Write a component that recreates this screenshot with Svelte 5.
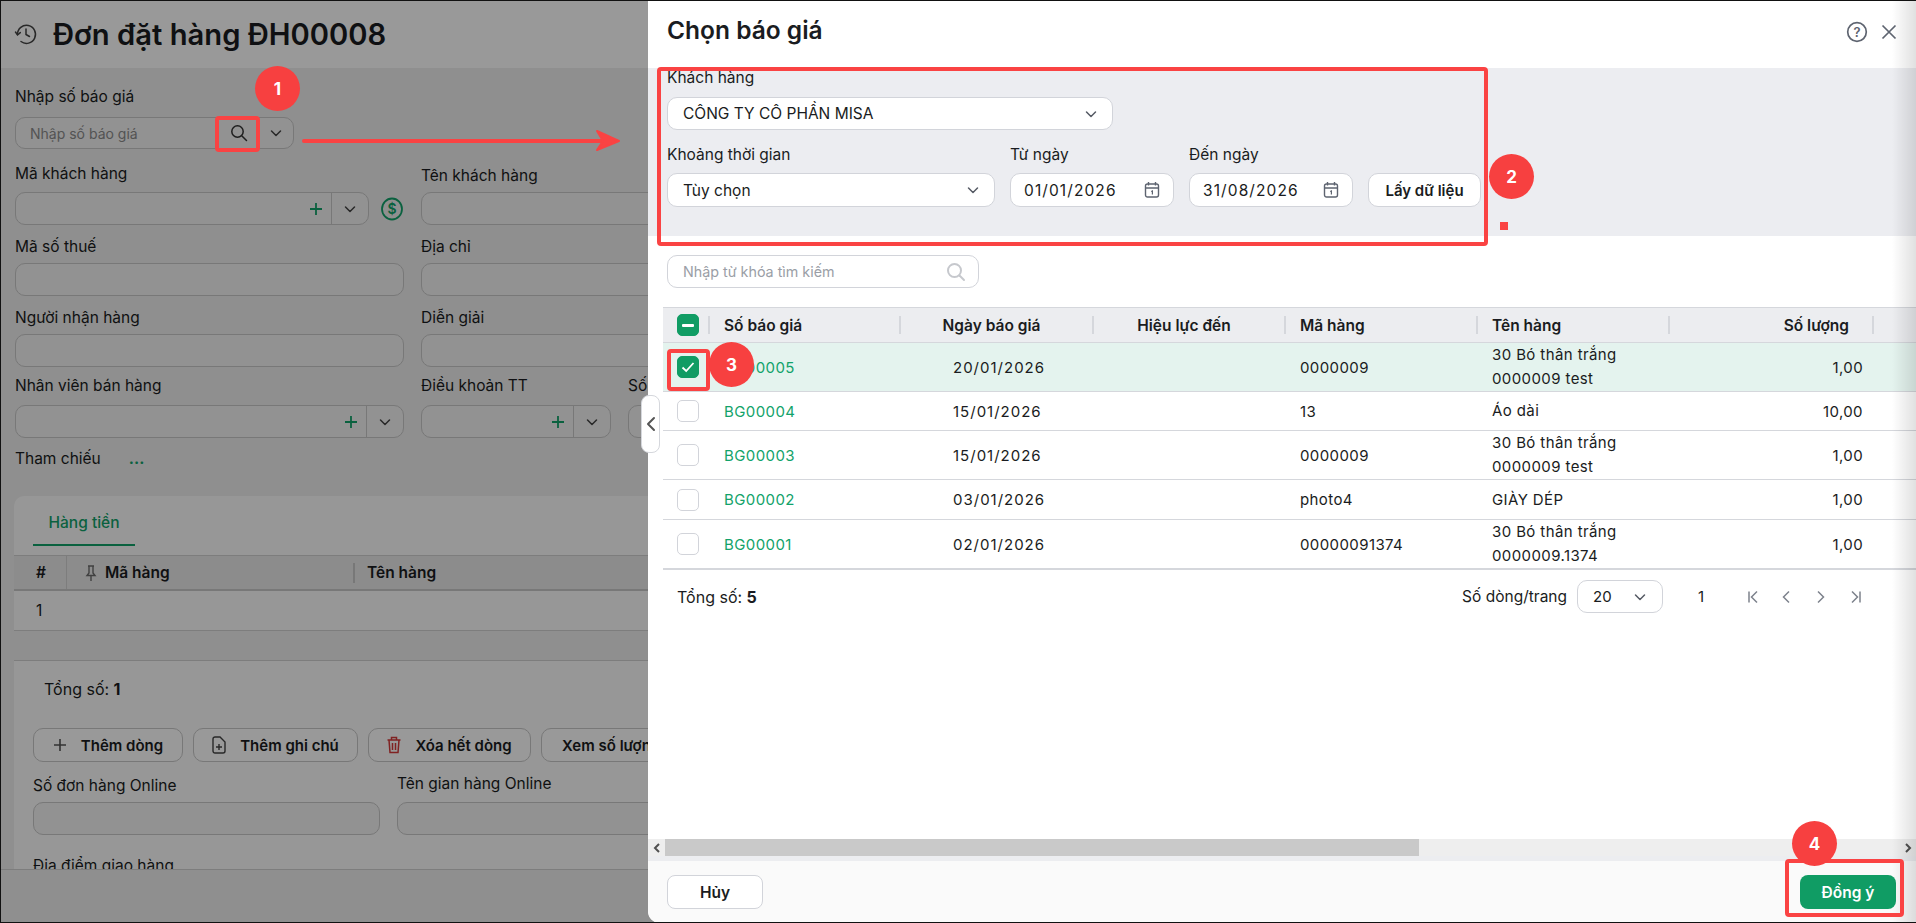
<script>
  const rows = [
    { code: 'BG00005', date: '20/01/2026', item: '0000009', name: ['30 Bó thân trắng', '0000009 test'], qty: '1,00', h: 49, on: true },
    { code: 'BG00004', date: '15/01/2026', item: '13', name: ['Áo dài'], qty: '10,00', h: 39 },
    { code: 'BG00003', date: '15/01/2026', item: '0000009', name: ['30 Bó thân trắng', '0000009 test'], qty: '1,00', h: 49 },
    { code: 'BG00002', date: '03/01/2026', item: 'photo4', name: ['GIÀY DÉP'], qty: '1,00', h: 40 },
    { code: 'BG00001', date: '02/01/2026', item: '00000091374', name: ['30 Bó thân trắng', '0000009.1374'], qty: '1,00', h: 49 }
  ];
  const widths = [47, 191, 193, 192, 192, 192, 204];
</script>

{#snippet chevron()}
  <svg class="chev" width="14" height="14" viewBox="0 0 14 14"><path d="M2.5 5l4.5 4.5L11.5 5" fill="none" stroke="currentColor" stroke-width="1.5" stroke-linecap="round" stroke-linejoin="round"/></svg>
{/snippet}

{#snippet plus()}
  <svg width="14" height="14" viewBox="0 0 14 14"><path d="M7 1v12M1 7h12" fill="none" stroke="#12a26a" stroke-width="1.8"/></svg>
{/snippet}

{#snippet calendar()}
  <svg width="16" height="18" viewBox="0 0 16 18"><g fill="none" stroke="#5e6470" stroke-width="1.4"><rect x="1.5" y="3" width="13" height="13" rx="2"/><path d="M1.5 7h13M4.5 1v3.5M11.5 1v3.5"/><path d="M7.2 10.5L8.4 10v3.6" stroke-width="1.2"/></g></svg>
{/snippet}

<div class="shot">
  <!-- trang phia sau -->
  <div class="page">
    <header class="page-head">
      <svg width="24" height="24" viewBox="0 0 24 24"><g fill="none" stroke="#444" stroke-width="1.5" stroke-linecap="round"><path d="M3.5 12.5A9 9 0 1 1 7 19.5"/><path d="M12 7v5.5l3.5 2"/><path d="M1.5 10l2 3 2.8-2.4" /></g></svg>
      <h1>Đơn đặt hàng ĐH00008</h1>
    </header>

    <div class="page-body">
      <div class="form">
        <div class="lab">Nhập số báo giá</div>
        <div class="box quote">
          <span class="ph">Nhập số báo giá</span>
          <span class="quote-search">
            <svg width="18" height="18" viewBox="0 0 18 18"><g fill="none" stroke="#333" stroke-width="1.5" stroke-linecap="round"><circle cx="7.5" cy="7.5" r="5.7"/><path d="M12 12l4.5 4.5"/></g></svg>
          </span>
          <span class="quote-arrow">{@render chevron()}</span>
        </div>

        <div class="form-grid">
          <div class="field lift">
            <div class="lab">Mã khách hàng</div>
            <div class="cust-line">
              <div class="box combo grow">
                <span class="combo-plus">{@render plus()}</span>
                <span class="combo-arrow">{@render chevron()}</span>
              </div>
              <svg class="money" width="22" height="24" viewBox="0 0 22 24"><ellipse cx="11" cy="12" rx="10" ry="10.5" fill="none" stroke="#12a26a" stroke-width="1.8"/><text x="11" y="17" text-anchor="middle" font-size="14" font-weight="600" fill="#12a26a" font-family="Inter, sans-serif">$</text></svg>
            </div>
          </div>
          <div class="field"><div class="lab">Tên khách hàng</div><div class="box"></div></div>

          <div class="field"><div class="lab">Mã số thuế</div><div class="box"></div></div>
          <div class="field"><div class="lab">Địa chỉ</div><div class="box"></div></div>

          <div class="field"><div class="lab">Người nhận hàng</div><div class="box"></div></div>
          <div class="field"><div class="lab">Diễn giải</div><div class="box"></div></div>

          <div class="field lift2">
            <div class="lab">Nhân viên bán hàng</div>
            <div class="box combo"><span class="combo-plus">{@render plus()}</span><span class="combo-arrow">{@render chevron()}</span></div>
          </div>
          <div class="term-line">
            <div class="field lift2 term">
              <div class="lab">Điều khoản TT</div>
              <div class="box combo"><span class="combo-plus">{@render plus()}</span><span class="combo-arrow">{@render chevron()}</span></div>
            </div>
            <div class="field lift2 grow"><div class="lab">Số ngày</div><div class="box"></div></div>
          </div>
        </div>

        <div class="ref"><span>Tham chiếu</span><b>...</b></div>
      </div>

      <section class="card">
        <div class="tabs"><span class="tab">Hàng tiền</span></div>
        <div class="grid-head">
          <span class="c-no">#</span>
          <span class="c-code">
            <svg width="12" height="18" viewBox="0 0 12 18"><path d="M3 2h6M4 2v7L2 11.5h8L8 9V2M6 11.5V17" fill="none" stroke="#6c6c6c" stroke-width="1.4"/></svg>
            Mã hàng
          </span>
          <span class="c-name">Tên hàng</span>
        </div>
        <div class="grid-row"><span class="c-no">1</span></div>
        <div class="grid-sum"></div>

        <div class="total">Tổng số: <b>1</b></div>

        <div class="actions">
          <button class="btn w150">
            <svg width="14" height="14" viewBox="0 0 14 14"><path d="M7 1v12M1 7h12" fill="none" stroke="#555" stroke-width="1.6"/></svg>
            Thêm dòng
          </button>
          <button class="btn w165">
            <svg width="14" height="18" viewBox="0 0 14 18"><g fill="none" stroke="#444" stroke-width="1.4"><path d="M1 3a2 2 0 0 1 2-2h5l5 5v9a2 2 0 0 1-2 2H3a2 2 0 0 1-2-2z"/><path d="M7 8v6M4 11h6"/></g></svg>
            Thêm ghi chú
          </button>
          <button class="btn w163">
            <svg width="14" height="18" viewBox="0 0 14 18"><g fill="none" stroke="#d63a3a" stroke-width="1.5"><path d="M0.5 4h13M4.5 4V1.5h5V4M2 4l1 12.5h8L12 4M5.5 7v7M8.5 7v7"/></g></svg>
            Xóa hết dòng
          </button>
          <button class="btn">Xem số lượng tồn</button>
        </div>

        <div class="online">
          <div class="on-field"><div class="lab">Số đơn hàng Online</div><div class="box"></div></div>
          <div class="on-field up"><div class="lab">Tên gian hàng Online</div><div class="box"></div></div>
        </div>
        <div class="lab place">Địa điểm giao hàng</div>
      </section>
    </div>
    <footer class="page-foot"></footer>
  </div>
  <div class="mask"></div>

  <!-- drawer chon bao gia -->
  <aside class="drawer">
    <button class="handle" aria-label="Thu gọn">
      <svg width="10" height="16" viewBox="0 0 10 16"><path d="M8 2L2 8l6 6" fill="none" stroke="#555" stroke-width="2" stroke-linecap="round" stroke-linejoin="round"/></svg>
    </button>
    <div class="dr-head">
      <h2>Chọn báo giá</h2>
      <svg class="help" width="22" height="22" viewBox="0 0 22 22"><circle cx="11" cy="11" r="9.3" fill="none" stroke="#5e6470" stroke-width="1.7"/><text x="11" y="16" text-anchor="middle" font-size="13" font-weight="600" fill="#5e6470" font-family="Inter, sans-serif">?</text></svg>
      <svg class="close" width="16" height="16" viewBox="0 0 16 16"><path d="M1.5 1.5l13 13M14.5 1.5l-13 13" fill="none" stroke="#5e6470" stroke-width="1.7"/></svg>
    </div>

    <div class="filter">
      <div class="f-lab">Khách hàng</div>
      <div class="ctl cust"><span>CÔNG TY CÔ PHẦN MISA</span>{@render chevron()}</div>
      <div class="f-line">
        <div class="f-col period">
          <div class="f-lab">Khoảng thời gian</div>
          <div class="ctl"><span>Tùy chọn</span>{@render chevron()}</div>
        </div>
        <div class="f-col date">
          <div class="f-lab">Từ ngày</div>
          <div class="ctl num"><span>01/01/2026</span>{@render calendar()}</div>
        </div>
        <div class="f-col date">
          <div class="f-lab">Đến ngày</div>
          <div class="ctl num"><span>31/08/2026</span>{@render calendar()}</div>
        </div>
        <button class="get">Lấy dữ liệu</button>
      </div>
    </div>

    <div class="search">
      <span>Nhập từ khóa tìm kiếm</span>
      <svg width="20" height="20" viewBox="0 0 20 20"><g fill="none" stroke="#c6c8cd" stroke-width="2" stroke-linecap="round"><circle cx="8.5" cy="8.5" r="6.5"/><path d="M13.5 13.5l4.5 4.5"/></g></svg>
    </div>

    <table>
      <colgroup>
        {#each widths as w}<col style="width:{w}px" />{/each}
        <col />
      </colgroup>
      <thead>
        <tr>
          <th class="sep"><span class="cb full"><i></i></span></th>
          <th class="sep pl">Số báo giá</th>
          <th class="sep mid">Ngày báo giá</th>
          <th class="sep mid">Hiệu lực đến</th>
          <th class="sep pl">Mã hàng</th>
          <th class="sep pl">Tên hàng</th>
          <th class="sep qty-h">Số lượng</th>
          <th></th>
        </tr>
      </thead>
      <tbody>
        {#each rows as r}
          <tr class:on={r.on} style="height:{r.h}px">
            <td>
              <span class="cb" class:full={r.on}>
                {#if r.on}
                  <svg width="14" height="12" viewBox="0 0 14 12"><path d="M1.5 6.5L5.2 10 12.5 2" fill="none" stroke="#fff" stroke-width="1.8"/></svg>
                {/if}
              </span>
            </td>
            <td class="pl code">{r.code}</td>
            <td class="dt">{r.date}</td>
            <td></td>
            <td class="pl">{r.item}</td>
            <td class="pl nm">{#each r.name as line}<div>{line}</div>{/each}</td>
            <td class="qty">{r.qty}</td>
            <td></td>
          </tr>
        {/each}
      </tbody>
    </table>

    <div class="t-foot">
      <div class="t-total">Tổng số: <b>5</b></div>
      <div class="pager">
        <span>Số dòng/trang</span>
        <div class="size"><span>20</span>{@render chevron()}</div>
        <span class="pg">1</span>
        <svg class="nav" width="116" height="14" viewBox="0 0 116 14"><g fill="none" stroke="#7d828c" stroke-width="1.5"><path d="M2 1.5v11M10 1.5L4.5 7l5.5 5.5"/><path d="M42 1.5L36.5 7l5.5 5.5"/><path d="M71 1.5L76.5 7 71 12.5"/><path d="M105 1.5l5.5 5.5-5.5 5.5M113 1.5v11"/></g></svg>
      </div>
    </div>

    <div class="spacer"></div>

    <div class="hbar">
      <span class="hb-btn"><svg width="8" height="10" viewBox="0 0 8 10"><path d="M6 1L2 5l4 4" fill="none" stroke="#505050" stroke-width="2"/></svg></span>
      <span class="hb-thumb"></span>
      <span class="hb-btn end"><svg width="8" height="10" viewBox="0 0 8 10"><path d="M2 1l4 4-4 4" fill="none" stroke="#505050" stroke-width="2"/></svg></span>
    </div>
    <div class="dr-foot">
      <button class="cancel">Hủy</button>
      <button class="ok">Đồng ý</button>
    </div>
    <div class="edge"></div>
  </aside>

  <!-- chu thich do ve len anh -->
  <div class="mark" style="left:215px;top:116px;width:45px;height:36px"></div>
  <div class="mark" style="left:657px;top:67px;width:831px;height:179px"></div>
  <div class="mark" style="left:667px;top:349px;width:43px;height:42px"></div>
  <div class="mark" style="left:1785px;top:859px;width:119px;height:58px"></div>
  <span class="badge" style="left:255px;top:66px">1</span>
  <span class="badge" style="left:1489px;top:154px">2</span>
  <span class="badge" style="left:709px;top:342px">3</span>
  <span class="badge" style="left:1792px;top:821px">4</span>
  <span class="dot"></span>
  <svg class="arrow" width="330" height="30" viewBox="0 0 330 30"><path d="M3 16H312" stroke="#fa4343" stroke-width="4" stroke-linecap="round"/><path d="M296 6l22 10-22 9 6-9z" fill="#fa4343" stroke="#fa4343" stroke-width="2" stroke-linejoin="round"/></svg>
</div>

<style>
  :global(body) {
    margin: 0;
    font-family: Inter, "Noto Sans", sans-serif;
    color: #1a1c21;
    font-size: 15.5px;
    overflow: hidden;
  }

  button {
    font-family: inherit;
    cursor: pointer;
  }

  .shot {
    position: relative;
    width: 1916px;
    height: 923px;
    overflow: hidden;
    background: #ecedf1;
  }

  .shot::after {
    content: '';
    position: absolute;
    inset: 0;
    border: 1px solid #111;
    border-right: 0;
    pointer-events: none;
    z-index: 9;
  }

  /* trang phia sau */
  .page {
    display: flex;
    flex-direction: column;
    width: 1100px;
    height: 923px;
    background: #eeeeee;
  }

  .page-head {
    display: flex;
    align-items: center;
    gap: 15px;
    height: 68px;
    padding-left: 14px;
    background: #fff;
    flex: none;
  }

  h1 {
    margin: 0;
    font-size: 29.2px;
    font-weight: 600;
  }

  .page-body {
    flex: 1;
    overflow: hidden;
    padding-top: 19px;
  }

  .page-foot {
    flex: none;
    height: 53px;
    background: #eeeeee;
    border-top: 1px solid #d0d0d0;
  }

  .form {
    padding: 0 15px;
  }

  .lab {
    height: 20px;
    line-height: 20px;
    white-space: nowrap;
  }

  .box {
    height: 33px;
    box-sizing: border-box;
    border: 1px solid #c8c8c8;
    border-radius: 10px;
    background: #f3f3f3;
  }

  .quote {
    display: flex;
    align-items: center;
    width: 279px;
    height: 32px;
    margin-top: 10px;
  }

  .ph {
    flex: 1;
    padding-left: 14px;
    color: #8b8b8b;
    font-size: 14px;
  }

  .quote-search {
    display: flex;
    justify-content: center;
    width: 39px;
  }

  .quote-arrow {
    display: flex;
    justify-content: center;
    width: 35px;
    color: #444;
  }

  .form-grid {
    display: grid;
    grid-template-columns: 389px 600px;
    grid-template-rows: repeat(4, 59px);
    column-gap: 17px;
    row-gap: 12px;
    margin-top: 17px;
  }

  .field {
    display: flex;
    flex-direction: column;
    justify-content: flex-end;
    gap: 6px;
    min-width: 0;
  }

  .field > * {
    flex: none;
  }

  .field.lift {
    gap: 8px;
  }

  .field.lift2 {
    gap: 9px;
  }

  .field.grow {
    flex: 1;
  }

  .cust-line {
    display: flex;
    align-items: center;
    gap: 12px;
  }

  .grow {
    flex: 1;
  }

  .money {
    flex: none;
    margin-right: 1px;
  }

  .combo {
    display: flex;
    align-items: center;
    justify-content: flex-end;
  }

  .combo-plus {
    display: flex;
    padding-right: 8px;
  }

  .combo-arrow {
    display: flex;
    align-items: center;
    justify-content: center;
    width: 36px;
    height: 100%;
    border-left: 1px solid #c8c8c8;
    color: #444;
  }

  .term-line {
    display: flex;
    gap: 17px;
  }

  .term {
    width: 190px;
  }

  .ref {
    display: flex;
    gap: 28px;
    margin-top: 11px;
    line-height: 20px;
  }

  .ref b {
    color: #12a26a;
  }

  .card {
    margin: 27px 0 0 14px;
    height: 374px;
    overflow: hidden;
    border-radius: 10px 0 0 0;
    background: #fcfcfc;
  }

  .tabs {
    height: 59px;
    box-sizing: border-box;
    padding-left: 19px;
  }

  .tab {
    display: block;
    box-sizing: border-box;
    width: 102px;
    height: 50px;
    padding-top: 17px;
    text-align: center;
    color: #12a26a;
    font-weight: 500;
    border-bottom: 2px solid #12a26a;
  }

  .grid-head {
    display: flex;
    align-items: center;
    box-sizing: border-box;
    height: 36px;
    border-top: 1px solid #d0d0d0;
    border-bottom: 2px solid #c8c8c8;
    background: #e9e9e9;
    font-weight: 600;
  }

  .c-no {
    width: 52px;
    box-sizing: border-box;
    padding-left: 22px;
  }

  .c-code {
    display: flex;
    align-items: center;
    gap: 8px;
    width: 287px;
    box-sizing: border-box;
    padding-left: 18px;
    border-left: 1px solid #d0d0d0;
    height: 100%;
  }

  .c-name {
    padding-left: 12px;
    border-left: 2px solid #c8c8c8;
    line-height: 20px;
  }

  .grid-row {
    display: flex;
    align-items: center;
    height: 39px;
    border-bottom: 1px solid #d0d0d0;
  }

  .grid-sum {
    height: 29px;
    background: #eeeeee;
    border-bottom: 1px solid #d0d0d0;
  }

  .total {
    padding: 18px 0 0 30px;
    line-height: 20px;
    font-size: 16px;
  }

  .actions {
    display: flex;
    gap: 10px;
    margin: 29px 0 0 19px;
  }

  .btn {
    display: flex;
    flex: none;
    align-items: center;
    justify-content: center;
    gap: 14px;
    height: 34px;
    padding: 0 20px;
    box-sizing: border-box;
    border: 1px solid #c8c8c8;
    border-radius: 10px;
    background: #fff;
    color: #1a1c21;
    font-size: 15px;
    font-weight: 600;
    white-space: nowrap;
  }

  .btn svg {
    flex: none;
  }

  .w150 { width: 150px; padding: 0; }
  .w165 { width: 165px; padding: 0; }
  .w163 { width: 163px; padding: 0; }

  .online {
    display: flex;
    align-items: flex-end;
    gap: 17px;
    margin: 12px 0 0 19px;
  }

  .on-field {
    width: 347px;
    display: flex;
    flex-direction: column;
    gap: 6px;
  }

  .on-field.up {
    width: 400px;
    gap: 8px;
  }

  .place {
    margin: 21px 0 0 19px;
  }

  .mask {
    position: absolute;
    inset: 0;
    background: rgba(0, 0, 0, 0.4);
  }

  /* drawer */
  .drawer {
    position: absolute;
    left: 648px;
    top: 0;
    bottom: 0;
    right: 0;
    display: flex;
    flex-direction: column;
    background: #fff;
    border-radius: 0 0 0 12px;
  }

  .handle {
    position: absolute;
    left: -7px;
    top: 395px;
    width: 19px;
    height: 58px;
    padding: 0;
    display: flex;
    align-items: center;
    justify-content: center;
    background: #fff;
    border: 1px solid #d5d7dc;
    border-radius: 8px;
    z-index: 2;
  }

  .dr-head {
    display: flex;
    align-items: center;
    flex: none;
    height: 68px;
    padding: 0 19px;
    position: relative;
  }

  h2 {
    margin: 0 0 8px;
    flex: 1;
    font-size: 24.5px;
    font-weight: 600;
  }

  .help {
    margin: 0 13px 4px 0;
  }

  .close {
    margin: 0 0 4px 0;
  }

  .filter {
    flex: none;
    height: 168px;
    box-sizing: border-box;
    padding-left: 19px;
    background: #ecedf1;
  }

  .f-lab {
    height: 20px;
    line-height: 20px;
    white-space: nowrap;
  }

  .ctl {
    display: flex;
    align-items: center;
    justify-content: space-between;
    box-sizing: border-box;
    height: 34px;
    padding: 0 14px 0 15px;
    background: #fff;
    border: 1px solid #d2d4da;
    border-radius: 10px;
  }

  .ctl .chev {
    color: #555a64;
  }

  .cust {
    width: 446px;
    height: 33px;
    margin-top: 9px;
  }

  .f-line {
    display: flex;
    align-items: flex-end;
    gap: 15px;
    margin-top: 15px;
  }

  .f-col .ctl {
    margin-top: 8px;
  }

  .period {
    width: 328px;
  }

  .date {
    width: 164px;
  }

  .num {
    padding: 0 13px;
    letter-spacing: 1.1px;
  }

  .get {
    width: 113px;
    height: 34px;
    padding: 0;
    background: #fff;
    border: 1px solid #d2d4da;
    border-radius: 10px;
    color: #1a1c21;
    font-size: 15px;
    font-weight: 600;
  }

  .search {
    display: flex;
    align-items: center;
    justify-content: space-between;
    box-sizing: border-box;
    flex: none;
    width: 312px;
    height: 33px;
    margin: 19px 0 0 19px;
    padding: 0 12px 0 15px;
    border: 1px solid #d2d4da;
    border-radius: 10px;
    color: #9a9ea6;
    font-size: 14.3px;
  }

  table {
    flex: none;
    margin: 19px 0 0 15px;
    width: 1253px;
    table-layout: fixed;
    border-collapse: collapse;
  }

  th {
    position: relative;
    height: 34px;
    padding: 0;
    background: #ecedf0;
    border-top: 1px solid #d5d7dc;
    border-bottom: 1px solid #d5d7dc;
    font-size: 15.5px;
    font-weight: 600;
    text-align: left;
  }

  th.sep::after {
    content: '';
    position: absolute;
    right: 0;
    top: 8px;
    bottom: 8px;
    width: 2px;
    background: #d5d7dc;
  }

  th.mid {
    text-align: center;
    padding-right: 12px;
  }

  th.qty-h {
    text-align: right;
    padding-right: 25px;
  }

  td {
    padding: 0;
    border-bottom: 1px solid #d5d7dc;
    font-size: 15px;
    letter-spacing: 0.4px;
  }

  tbody tr:last-child td {
    border-bottom: 2px solid #d5d7dc;
  }

  tr.on td {
    background: #e4f3ee;
  }

  .pl {
    padding-left: 14px;
  }

  .code {
    color: #12a26a;
  }

  .dt {
    padding-left: 52px;
    letter-spacing: 1px;
  }

  .nm {
    line-height: 24px;
  }

  .qty {
    text-align: right;
    padding-right: 11px;
  }

  .cb {
    display: flex;
    align-items: center;
    justify-content: center;
    box-sizing: border-box;
    width: 22px;
    height: 22px;
    margin-left: 14px;
    background: #fff;
    border: 1px solid #d2d4da;
    border-radius: 5px;
  }

  .cb.full {
    background: #109c64;
    border-color: #109c64;
  }

  .cb i {
    display: block;
    width: 12px;
    height: 3px;
    background: #fff;
    border-radius: 1px;
  }

  .t-foot {
    display: flex;
    align-items: center;
    justify-content: space-between;
    flex: none;
    height: 33px;
    margin: 10px 0 0 29px;
  }

  .t-total {
    font-size: 16px;
  }

  .pager {
    display: flex;
    align-items: center;
    margin-right: 53px;
  }

  .size {
    display: flex;
    align-items: center;
    justify-content: space-between;
    box-sizing: border-box;
    width: 86px;
    height: 33px;
    margin-left: 10px;
    padding: 0 15px;
    border: 1px solid #d2d4da;
    border-radius: 10px;
    font-size: 15px;
  }

  .size .chev {
    color: #555a64;
  }

  .pg {
    width: 76px;
    text-align: center;
    font-size: 15px;
  }

  .nav {
    margin-left: 8px;
  }

  .spacer {
    flex: 1;
  }

  .hbar {
    display: flex;
    flex: none;
    height: 17px;
    background: #eee;
  }

  .hb-btn {
    display: flex;
    align-items: center;
    justify-content: center;
    width: 17px;
    flex: none;
  }

  .hb-btn.end {
    margin-left: auto;
  }

  .hb-thumb {
    width: 754px;
    background: #c9c9c9;
  }

  .dr-foot {
    display: flex;
    justify-content: space-between;
    flex: none;
    height: 67px;
    box-sizing: border-box;
    padding: 14px 20px 0 19px;
    background: #fafafa;
    border-top: 5px solid #ecedf0;
    border-radius: 0 0 0 12px;
  }

  .cancel,
  .ok {
    width: 96px;
    height: 34px;
    padding: 0;
    border-radius: 8px;
    font-size: 15.5px;
    font-weight: 600;
  }

  .cancel {
    background: #fff;
    border: 1px solid #d2d4da;
    color: #1a1c21;
  }

  .ok {
    background: #109c64;
    border: 0;
    color: #fff;
  }

  .edge {
    position: absolute;
    top: 0;
    bottom: 0;
    right: 0;
    width: 24px;
    background: linear-gradient(to right, rgba(0, 0, 0, 0), rgba(0, 0, 0, 0.12));
    pointer-events: none;
  }

  /* chu thich */
  .mark {
    position: absolute;
    box-sizing: border-box;
    border: 4px solid #fa4343;
    border-radius: 4px;
    z-index: 5;
  }

  .badge {
    position: absolute;
    display: flex;
    align-items: center;
    justify-content: center;
    width: 45px;
    height: 45px;
    border-radius: 50%;
    background: #f74040;
    color: #fff;
    font-size: 17px;
    font-weight: 700;
    z-index: 6;
  }

  .dot {
    position: absolute;
    left: 1500px;
    top: 222px;
    width: 8px;
    height: 8px;
    background: #fa4343;
    z-index: 5;
  }

  .arrow {
    position: absolute;
    left: 301px;
    top: 125px;
    z-index: 5;
  }
</style>
